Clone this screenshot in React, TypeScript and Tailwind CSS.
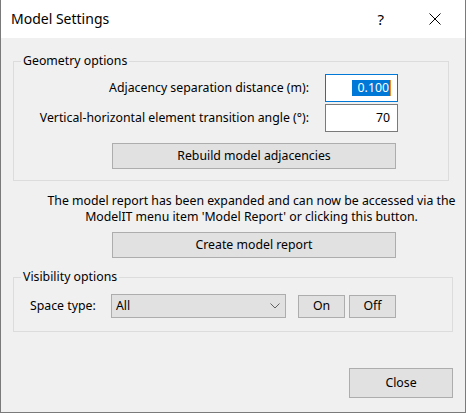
import { ReactNode } from "react";

const font = { fontFamily: '"Noto Sans", "Open Sans", sans-serif' };

const Button = ({ className, children }: { className: string; children: ReactNode }) => (
  <div
    className={`flex items-center justify-center bg-[#e1e1e1] border border-[#adadad] text-black ${className}`}
  >
    {children}
  </div>
);

const GroupBox = ({ title, className, children }: { title: string; className: string; children: ReactNode }) => (
  <div className={`border border-[#dcdcdc] ${className}`}>
    <div className="-mt-[9px] ml-[7px] w-fit px-[2px] bg-[#f0f0f0] leading-[16px]">{title}</div>
    {children}
  </div>
);

const App = () => {
  return (
    <div
      className="w-[466px] h-[413px] flex flex-col bg-[#f0f0f0] border-x border-b border-[#7a7a7a] text-[12.3px] text-black overflow-hidden"
      style={font}
    >
      {/* title bar */}
      <div className="h-[38px] shrink-0 bg-white flex items-center pl-[10px]">
        <span className="text-[14px] leading-[20px] -mt-[1px]">Model Settings</span>
        <span className="ml-auto mr-[45px] text-[15px] leading-[20px] -mt-[1px]">?</span>
        <svg width="12" height="12" viewBox="0 0 12 12" className="mr-[24px] -mt-[1px]">
          <path d="M0.5 0.5 L11.5 11.5 M11.5 0.5 L0.5 11.5" stroke="#000" strokeWidth="1" fill="none" />
        </svg>
      </div>

      <div className="flex-1 flex flex-col px-[12px]">
        {/* geometry */}
        <GroupBox title="Geometry options" className="mt-[23px] w-[436px] h-[120px]">
          <div className="mt-[5px] flex flex-col gap-[2px] pr-[50px]">
            <div className="flex items-center justify-end">
              <span className="mr-[16px]">Adjacency separation distance (m):</span>
              <div className="w-[73px] h-[28px] bg-white border border-[#0078d7] flex items-center justify-end pr-[6px]">
                <span className="bg-[#0078d7] text-white leading-[16px] pl-[6px] pr-[1px]">0.100</span>
                <span className="w-[1px] h-[16px] bg-[#f28c28]" />
              </div>
            </div>
            <div className="flex items-center justify-end">
              <span className="mr-[16px]">Vertical-horizontal element transition angle (°):</span>
              <div className="w-[73px] h-[28px] bg-white border border-[#7a7a7a] flex items-center justify-end pr-[7px]">
                70
              </div>
            </div>
          </div>
          <Button className="mt-[11px] ml-[98px] w-[284px] h-[26px]">Rebuild model adjacencies</Button>
        </GroupBox>

        {/* report text */}
        <div className="mt-[12px] ml-[37px] flex flex-col items-center leading-[16px] whitespace-nowrap">
          <span>The model report has been expanded and can now be accessed via the</span>
          <span>ModelIT menu item 'Model Report' or clicking this button.</span>
        </div>
        <Button className="mt-[7px] ml-[99px] w-[284px] h-[26px]">Create model report</Button>

        {/* visibility */}
        <GroupBox title="Visibility options" className="mt-[19px] w-[440px] h-[55px]">
          <div className="mt-[9px] flex items-center">
            <span className="ml-[16px] w-[81px]">Space type:</span>
            <div className="w-[175px] h-[24px] bg-[#e1e1e1] border border-[#adadad] flex items-center pl-[4px] pr-[5px]">
              <span>All</span>
              <svg width="10" height="6" viewBox="0 0 10 6" className="ml-auto">
                <path d="M0.5 0.5 L5 5 L9.5 0.5" stroke="#606060" strokeWidth="1" fill="none" />
              </svg>
            </div>
            <Button className="ml-[12px] w-[47px] h-[23px]">On</Button>
            <Button className="ml-[4px] w-[47px] h-[23px]">Off</Button>
          </div>
        </GroupBox>

        <div className="mt-[36px] flex justify-end">
          <Button className="w-[104px] h-[30px]">Close</Button>
        </div>
      </div>
    </div>
  );
};

export default App;
